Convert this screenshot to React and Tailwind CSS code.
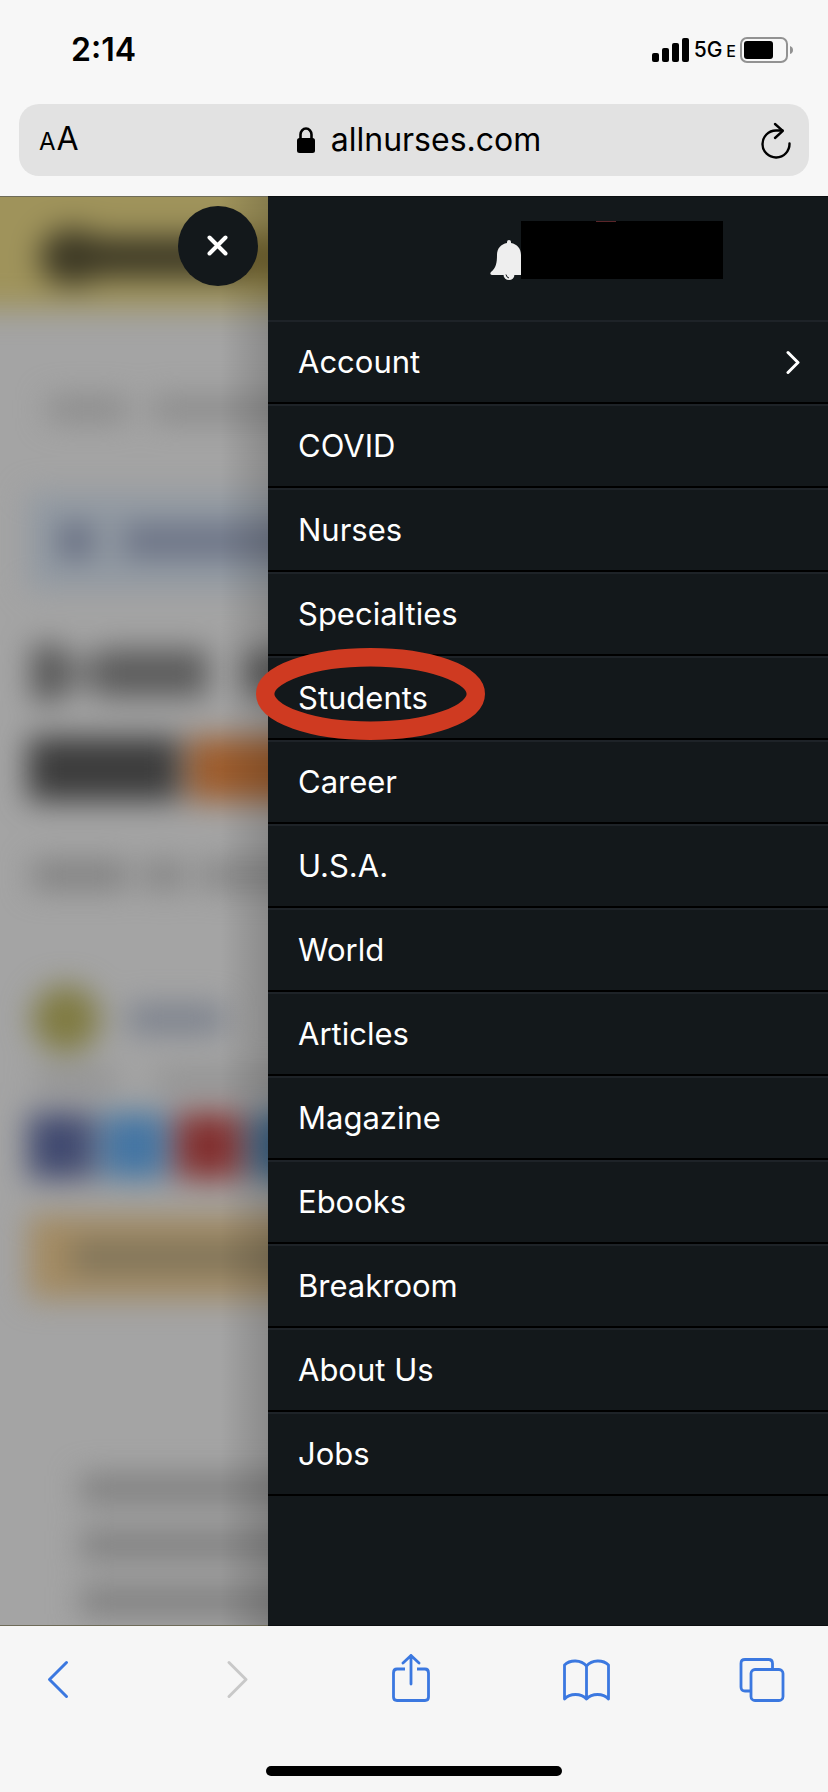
import { useState } from 'react';

const menuItems = [
  'Account',
  'COVID',
  'Nurses',
  'Specialties',
  'Students',
  'Career',
  'U.S.A.',
  'World',
  'Articles',
  'Magazine',
  'Ebooks',
  'Breakroom',
  'About Us',
  'Jobs',
];

const StatusBar = () => (
  <div className="flex h-[104px] items-center justify-between pr-[34px] pb-1 pl-[71px]">
    <span className="text-[32px] leading-10 font-semibold">2:14</span>
    <div className="flex items-center gap-1">
      <svg className="h-6 w-[38px]" viewBox="0 0 38 24" fill="currentColor">
        <rect x="0" y="15" width="7" height="9" rx="2" />
        <rect x="10" y="10" width="7" height="14" rx="2" />
        <rect x="20" y="5" width="7" height="19" rx="2" />
        <rect x="30" y="0" width="7" height="24" rx="2" />
      </svg>
      <div className="flex items-baseline gap-1 leading-6 font-medium">
        <span className="text-[21px]">5G</span>
        <span className="text-[16px]">E</span>
      </div>
      <svg className="h-[26px] w-[54px]" viewBox="0 0 54 26" fill="none">
        <rect x="1" y="1" width="46" height="24" rx="6" stroke="#929292" strokeWidth="2" />
        <rect x="4" y="4" width="29" height="18" rx="3" fill="#000" />
        <path d="M50 9 q3 1 3 4 t-3 4z" fill="#929292" />
      </svg>
    </div>
  </div>
);

const AddressBar = () => (
  <div className="mx-[19px] mb-5 flex h-[72px] items-center justify-between rounded-[20px] bg-[#e2e2e2] pr-[18px] pl-5">
    <button aria-label="Text size" className="flex w-12 items-baseline gap-px">
      <span className="text-[24px] leading-10">A</span>
      <span className="text-[32px] leading-10">A</span>
    </button>
    <div className="flex items-center gap-4">
      <svg className="h-[26px] w-[18px]" viewBox="0 0 18 26">
        <path d="M3.500 12V7.500a5.500 6 0 0 1 11 0V12" fill="none" stroke="#000" strokeWidth="2.600" />
        <rect x="0" y="11" width="18" height="15" rx="2.500" />
      </svg>
      <span className="text-[32px] leading-10">allnurses.com</span>
    </div>
    <button aria-label="Reload" className="flex w-10 justify-end">
      <svg className="h-[38px] w-[30px]" viewBox="0 0 30 38" fill="none" stroke="#000" strokeWidth="2.400" strokeLinecap="round" strokeLinejoin="round">
        <path d="M28.500 22.500A13.500 13.500 0 1 1 15 9.500h6.500" />
        <path d="M14 3l7.800 6.800L14 17" />
      </svg>
    </button>
  </div>
);

// the article behind the menu, out of focus
const PageBehind = () => (
  <div aria-hidden="true" className="w-screen blur-[15px]">
    <div className="-mt-12 -ml-12 flex h-40 items-center bg-[#9f935b] pt-14 pl-[88px]">
      <div className="h-14 w-16 rounded-full bg-[#3c3824]" />
      <div className="-ml-6 h-10 w-40 bg-[#3c3824]" />
      <div className="h-11 w-16 bg-[#74652f]" />
    </div>
    <div className="mt-[88px] flex gap-6 pl-12">
      <div className="h-6 w-20 bg-[#8a8a8a]" />
      <div className="h-6 w-72 bg-[#8a8a8a]" />
    </div>
    <div className="mt-[72px] ml-7 flex h-24 items-center gap-8 bg-[#9199a2] pl-8">
      <div className="size-8 bg-[#62697e]" />
      <div className="h-8 w-96 bg-[#6b7285]" />
    </div>
    <div className="mt-14 flex items-center pl-8">
      <div className="h-14 w-8 bg-[#555]" />
      <div className="h-8 w-8 bg-[#777]" />
      <div className="h-12 w-28 bg-[#5c5c5c]" />
      <div className="ml-9 h-11 w-72 bg-[#5c5c5c]" />
    </div>
    <div className="mt-9 flex gap-2 pl-7">
      <div className="h-16 w-[152px] bg-[#3c3c3c]" />
      <div className="h-16 w-64 bg-[#9c5c2d]" />
    </div>
    <div className="mt-[60px] flex gap-4 pl-8">
      <div className="h-7 w-24 bg-[#808080]" />
      <div className="h-7 w-10 bg-[#828282]" />
      <div className="h-7 w-64 bg-[#868686]" />
    </div>
    <div className="mt-[96px] flex items-center gap-7 pl-8">
      <div className="size-[68px] rounded-full bg-[#807b42]" />
      <div className="h-7 w-24 bg-[#7a808c]" />
    </div>
    <div className="mt-5 flex gap-10 pl-9">
      <div className="h-4 w-20 bg-[#8a8a8a]" />
      <div className="h-4 w-64 bg-[#8a8a8a]" />
    </div>
    <div className="mt-6 flex gap-2 pl-7">
      <div className="size-[66px] bg-[#414a70]" />
      <div className="size-[66px] bg-[#4475a3]" />
      <div className="size-[66px] bg-[#823030]" />
      <div className="size-[66px] bg-[#3a6386]" />
    </div>
    <div className="mt-9 ml-7 flex h-[84px] items-center bg-[#a38b63] pl-11">
      <div className="h-8 w-96 bg-[#7f745b]" />
    </div>
    <div className="mt-44 grid gap-7 pl-20">
      <div className="h-7 w-96 bg-[#7e7e7e]" />
      <div className="h-7 w-96 bg-[#7e7e7e]" />
      <div className="h-7 w-96 bg-[#7e7e7e]" />
    </div>
  </div>
);

const MenuRow = ({ label, circled, hasChildren }) => (
  <li className="relative border-t-2 border-b-2 border-t-[#1e2328] border-b-black">
    <a href="#" className="flex h-20 items-center justify-between pr-[27px] pl-[30px] text-[31px] leading-10">
      {label}
      {hasChildren && (
        <svg className="h-6 w-4" viewBox="0 0 16 24" fill="none" stroke="#fff" strokeWidth="3" strokeLinecap="round" strokeLinejoin="round">
          <path d="M3 2.500l10 10L3 22.500" />
        </svg>
      )}
    </a>
    {circled && (
      <svg className="pointer-events-none absolute -top-[10px] -left-3 z-10 h-[92px] w-[229px]" viewBox="0 0 229 92">
        <ellipse cx="114.500" cy="46" rx="105.300" ry="36.800" fill="none" stroke="#cf3a21" strokeWidth="18.400" />
      </svg>
    )}
  </li>
);

const Drawer = () => (
  <nav className="relative w-[560px] max-w-[80%] shrink-0 border-y border-[#0b0e10] bg-[#13181b] text-white">
    <div className="flex h-[123px] items-start justify-end pt-6 pr-[105px]">
      <button aria-label="Notifications" className="mt-[18px]">
        <svg className="h-[42px] w-10" viewBox="0 0 40 42">
          <path d="M20 1a2 2 0 0 1 2 2v1c6 1 10 5.500 10 12 0 9 1 13 6 17 1 1 1 3-1 3H3c-2 0-2-2-1-3 5-4 6-9 6-17C8 9.500 12 5 18 4V3a2 2 0 0 1 2-2z" fill="#eee" />
          <circle cx="20" cy="35.500" r="5.500" fill="#eee" />
          <path d="M17 35.500q.5 3 3 3.500" fill="none" stroke="#13181b" strokeWidth="1" />
        </svg>
      </button>
      <div className="-ml-2 h-[58px] w-[202px] bg-black">
        <div className="mx-auto h-px w-5 -translate-x-4 bg-[#5a2529]" />
      </div>
    </div>
    <ul>
      {menuItems.map((item) => (
        <MenuRow key={item} label={item} circled={item === 'Students'} hasChildren={item === 'Account'} />
      ))}
    </ul>
  </nav>
);

const Toolbar = () => (
  <footer className="bg-[#f6f6f6] pt-7 pb-4">
    <div className="flex justify-between pr-[42px] pl-[34px] text-[#3b78e0]">
      <button aria-label="Back">
        <svg className="size-12" viewBox="0 0 48 48" fill="none" stroke="currentColor" strokeWidth="3" strokeLinecap="round" strokeLinejoin="round">
          <path d="M32.500 8.500L15.500 25.500l17 17" />
        </svg>
      </button>
      <button aria-label="Forward" className="text-[#c8c8c8]" disabled>
        <svg className="size-12" viewBox="0 0 48 48" fill="none" stroke="currentColor" strokeWidth="3" strokeLinecap="round" strokeLinejoin="round">
          <path d="M19 8.500l17 17-17 17" />
        </svg>
      </button>
      <button aria-label="Share">
        <svg className="size-12" viewBox="0 0 48 48" fill="none" stroke="currentColor" strokeWidth="2.800" strokeLinecap="round" strokeLinejoin="round">
          <path d="M19 15h-8q-3.500 0-3.500 4v24q0 3.500 3.500 3.500h28q3.500 0 3.500-3.500V19q0-4-3.500-4h-8" strokeLinecap="butt" />
          <path d="M25 30V1.500M17 9l8-7.500L33 9" />
        </svg>
      </button>
      <button aria-label="Bookmarks">
        <svg className="size-12" viewBox="0 0 48 48" fill="none" stroke="currentColor" strokeWidth="2.800" strokeLinejoin="round">
          <path d="M24.500 12C19 5.500 8 5.500 2.500 11v34c5.500-6 16.500-6 22 0 5.500-6 16.500-6 22 0V11C41 5.500 30 5.500 24.500 12zV45" />
        </svg>
      </button>
      <button aria-label="Tabs">
        <svg className="size-12" viewBox="0 0 48 48" fill="none" stroke="currentColor" strokeWidth="2.800">
          <rect x="13" y="15.500" width="32" height="31" rx="4" />
          <path d="M13 37H7q-4 0-4-4V9.500q0-4 4-4h23.500q4 0 4 4v6" />
        </svg>
      </button>
    </div>
    <div className="mx-auto mt-16 h-[10px] w-[296px] rounded-full bg-black" />
  </footer>
);

const App = () => {
  const [menuOpen, setMenuOpen] = useState(true);

  return (
    <div className="flex min-h-screen flex-col bg-[#f7f7f7] font-['Inter','Liberation_Sans',sans-serif] text-black">
      <header>
        <StatusBar />
        <AddressBar />
      </header>
      <main className="flex flex-1 bg-[#a4a4a4]">
        <div className="relative min-w-0 flex-1 overflow-hidden border-y border-[#6e6b58]">
          <PageBehind />
          {menuOpen && (
            <>
              <div className="absolute inset-y-0 right-0 w-12 bg-linear-to-r from-transparent to-black/15" />
              <button
                aria-label="Close menu"
                onClick={() => setMenuOpen(false)}
                className="absolute top-[9px] right-[10px] flex size-20 items-center justify-center rounded-full bg-[#13181b]"
              >
                <svg className="size-6" viewBox="0 0 24 24" stroke="#fff" strokeWidth="4" strokeLinecap="round">
                  <path d="M3.500 3.500l16 16M19.500 3.500l-16 16" />
                </svg>
              </button>
            </>
          )}
        </div>
        {menuOpen && <Drawer />}
      </main>
      <Toolbar />
    </div>
  );
};

export default App;
